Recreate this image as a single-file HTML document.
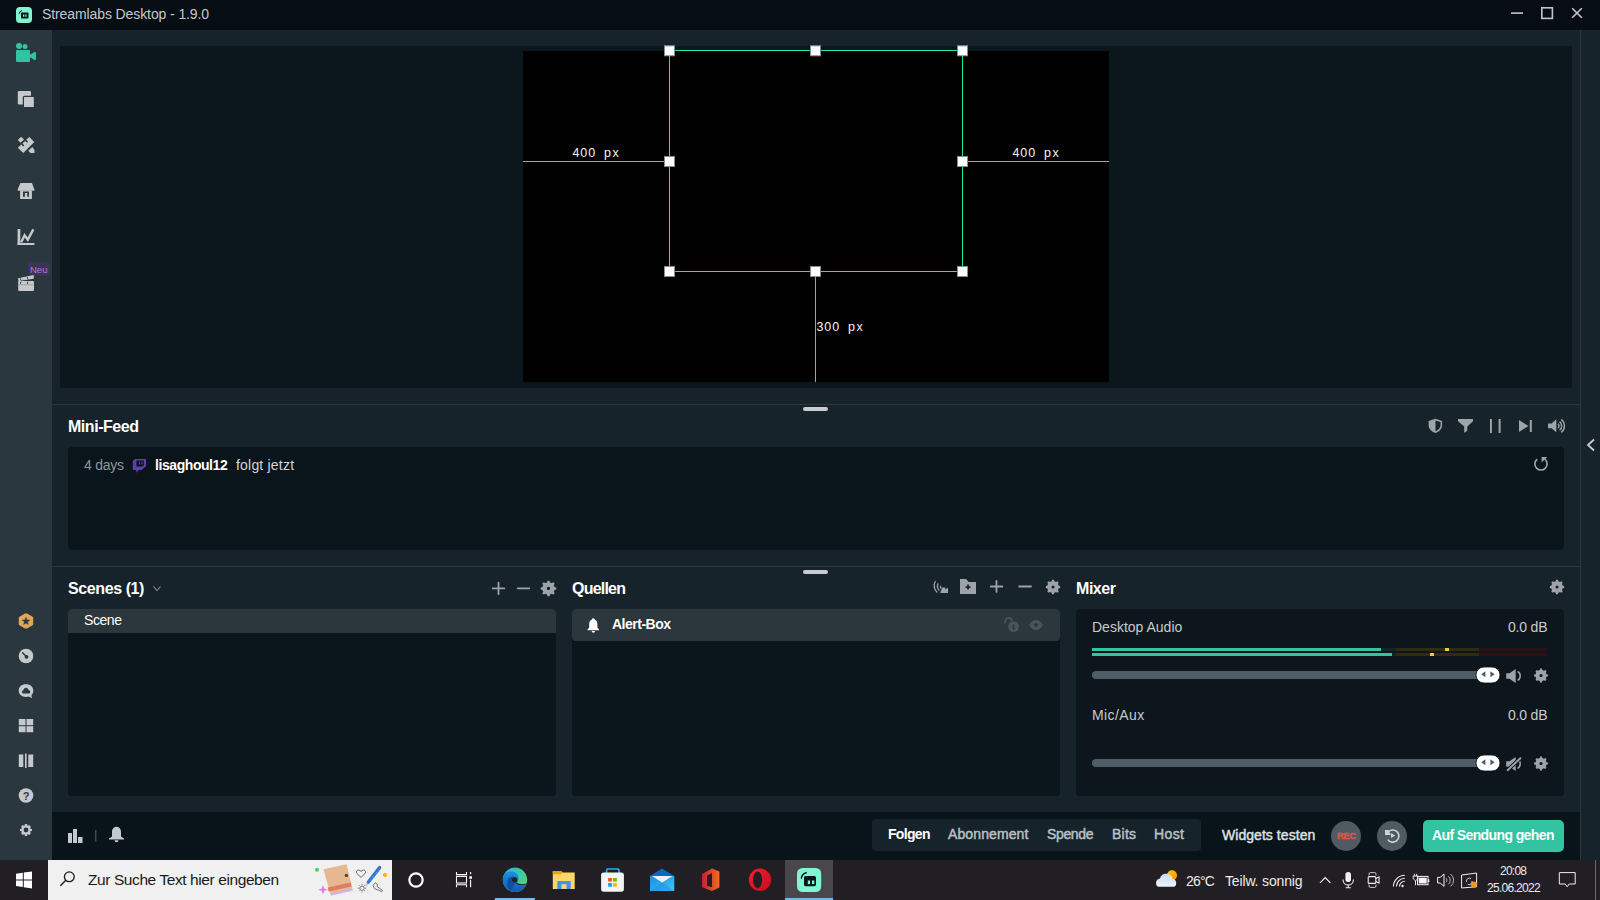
<!DOCTYPE html>
<html><head><meta charset="utf-8">
<style>
*{margin:0;padding:0;box-sizing:border-box}
html,body{width:1600px;height:900px;overflow:hidden;background:#17232b;font-family:"Liberation Sans",sans-serif}
.a{position:absolute}
.t{position:absolute;white-space:nowrap;line-height:1}
.b{font-weight:bold}
svg{position:absolute;overflow:visible}
</style></head><body>
<!-- title bar -->
<div class="a" style="left:0;top:0;width:1600px;height:30px;background:#060d13"></div>
<div class="t" style="left:42px;top:7px;font-size:14px;letter-spacing:-0.1px;color:#c4c8cb">Streamlabs Desktop - 1.9.0</div>

<!-- sidebar -->
<div class="a" style="left:0;top:30px;width:52px;height:830px;background:#2b373e"></div>
<div class="a" style="left:28px;top:262px;width:22px;height:14px;border-radius:4px;background:#3b3552"></div>
<div class="t" style="left:30px;top:265px;font-size:9.5px;color:#b674f8">Neu</div>

<!-- right strip -->
<div class="a" style="left:1580px;top:30px;width:1px;height:830px;background:#2b363d"></div>

<!-- preview -->
<div class="a" style="left:60px;top:46px;width:1512px;height:342px;background:#0c161d"></div>
<div class="a" style="left:523px;top:51px;width:586px;height:331px;background:#000"></div>
<div class="t" style="left:572.5px;top:147px;font-size:12.5px;letter-spacing:0.9px;color:#f4f4f4">400</div><div class="t" style="left:604.0px;top:147px;font-size:12.5px;letter-spacing:1.6px;color:#f4f4f4">px</div>
<div class="t" style="left:1012.5px;top:147px;font-size:12.5px;letter-spacing:0.9px;color:#f4f4f4">400</div><div class="t" style="left:1044.0px;top:147px;font-size:12.5px;letter-spacing:1.6px;color:#f4f4f4">px</div>
<div class="t" style="left:816.5px;top:321px;font-size:12.5px;letter-spacing:0.9px;color:#f4f4f4">300</div><div class="t" style="left:848.0px;top:321px;font-size:12.5px;letter-spacing:1.6px;color:#f4f4f4">px</div>

<!-- separators -->
<div class="a" style="left:52px;top:404px;width:1528px;height:1px;background:#2b363d"></div>
<div class="a" style="left:803px;top:407px;width:25px;height:4px;border-radius:2px;background:#c8cccf"></div>
<div class="a" style="left:52px;top:566px;width:1528px;height:1px;background:#2b363d"></div>
<div class="a" style="left:803px;top:570px;width:25px;height:4px;border-radius:2px;background:#c8cccf"></div>

<!-- mini feed -->
<div class="t b" style="left:68px;top:419px;font-size:16px;letter-spacing:-0.46px;color:#fff">Mini-Feed</div>
<div class="a" style="left:68px;top:447px;width:1496px;height:103px;border-radius:4px;background:#09141b"></div>
<div class="t" style="left:84px;top:458px;font-size:14px;letter-spacing:-0.24px;color:#8f989e">4 days</div>
<div class="t b" style="left:155px;top:458px;font-size:14px;letter-spacing:-0.43px;color:#fff">lisaghoul12</div>
<div class="t" style="left:236px;top:458px;font-size:14px;letter-spacing:0.2px;color:#d3d7d9">folgt jetzt</div>

<!-- scenes -->
<div class="t b" style="left:68px;top:581px;font-size:16px;letter-spacing:-0.4px;color:#fff">Scenes (1)</div>
<div class="a" style="left:68px;top:609px;width:488px;height:187px;border-radius:4px;background:#0a151c"></div>
<div class="a" style="left:68px;top:609px;width:488px;height:24px;border-radius:4px 4px 0 0;background:#2b363d"></div>
<div class="t" style="left:84px;top:613px;font-size:14px;letter-spacing:-0.43px;color:#fff">Scene</div>

<!-- sources -->
<div class="t b" style="left:572px;top:581px;font-size:16px;letter-spacing:-0.78px;color:#fff">Quellen</div>
<div class="a" style="left:572px;top:609px;width:488px;height:187px;border-radius:4px;background:#0a151c"></div>
<div class="a" style="left:572px;top:609px;width:488px;height:32px;border-radius:4px;background:#2b363d"></div>
<div class="t b" style="left:612px;top:617px;font-size:14px;letter-spacing:-0.5px;color:#fff">Alert-Box</div>

<!-- mixer -->
<div class="t b" style="left:1076px;top:581px;font-size:16px;letter-spacing:-0.45px;color:#fff">Mixer</div>
<div class="a" style="left:1076px;top:609px;width:488px;height:187px;border-radius:4px;background:#0c161c"></div>
<div class="t" style="left:1092px;top:620px;font-size:14px;color:#c8cbcc">Desktop Audio</div>
<div class="t" style="left:1508px;top:620px;font-size:14px;letter-spacing:-0.2px;color:#c8cbcc">0.0 dB</div>
<div class="t" style="left:1092px;top:708px;font-size:14px;letter-spacing:0.42px;color:#c8cbcc">Mic/Aux</div>
<div class="t" style="left:1508px;top:708px;font-size:14px;letter-spacing:-0.2px;color:#c8cbcc">0.0 dB</div>

<!-- bottom bar -->
<div class="a" style="left:52px;top:812px;width:1528px;height:48px;background:#08131a"></div>
<div class="a" style="left:872px;top:819px;width:329px;height:32px;border-radius:4px;background:#17232b"></div>
<div class="t b" style="left:888px;top:827px;font-size:14px;letter-spacing:-0.68px;color:#fff">Folgen</div>
<div class="t" style="left:948px;top:827px;font-size:14px;letter-spacing:0.11px;color:#b9c1c6;-webkit-text-stroke:0.45px #b9c1c6">Abonnement</div>
<div class="t" style="left:1047px;top:827px;font-size:14px;letter-spacing:-0.36px;color:#b9c1c6;-webkit-text-stroke:0.45px #b9c1c6">Spende</div>
<div class="t" style="left:1112px;top:827px;font-size:14px;letter-spacing:0.23px;color:#b9c1c6;-webkit-text-stroke:0.45px #b9c1c6">Bits</div>
<div class="t" style="left:1154px;top:827px;font-size:14px;letter-spacing:0.4px;color:#b9c1c6;-webkit-text-stroke:0.45px #b9c1c6">Host</div>
<div class="t" style="left:1222px;top:828px;font-size:14px;letter-spacing:0.05px;color:#dce0e2;-webkit-text-stroke:0.45px #dce0e2">Widgets testen</div>
<div class="a" style="left:1331px;top:821px;width:30px;height:30px;border-radius:50%;background:#4f5b61"></div>
<div class="t b" style="left:1337px;top:831px;font-size:9.5px;letter-spacing:-0.5px;color:#ec5149;-webkit-text-stroke:0.3px #ec5149">REC</div>
<div class="a" style="left:1377px;top:821px;width:30px;height:30px;border-radius:50%;background:#4f5b61"></div>
<div class="a" style="left:1423px;top:820px;width:141px;height:32px;border-radius:5px;background:#31c3a2"></div>
<div class="t b" style="left:1432px;top:828px;font-size:14px;letter-spacing:-0.61px;color:#fff">Auf Sendung gehen</div>

<!-- taskbar -->
<div class="a" style="left:0;top:860px;width:1600px;height:40px;background:#211e24"></div>
<div class="a" style="left:48px;top:860px;width:344px;height:40px;background:#f0f0f0"></div>
<div class="t" style="left:88px;top:872px;font-size:15.5px;letter-spacing:-0.41px;color:#1a1a1a">Zur Suche Text hier eingeben</div>
<div class="a" style="left:785px;top:860px;width:48px;height:40px;background:#4a474b"></div>
<div class="a" style="left:495px;top:898px;width:40px;height:2px;background:#76b9ed"></div>
<div class="a" style="left:785px;top:898px;width:48px;height:2px;background:#76b9ed"></div>
<div class="t" style="left:1186px;top:874px;font-size:14px;letter-spacing:-0.77px;color:#ececec">26°C</div>
<div class="t" style="left:1225px;top:874px;font-size:14px;letter-spacing:-0.15px;color:#ececec">Teilw. sonnig</div>
<div class="t" style="left:1500px;top:865px;font-size:12px;letter-spacing:-0.75px;color:#ececec">20:08</div>
<div class="t" style="left:1487px;top:882px;font-size:12px;letter-spacing:-0.72px;color:#ececec">25.06.2022</div>
<div class="a" style="left:1595px;top:860px;width:1px;height:40px;background:#6a666a"></div>

<!-- ICONS OVERLAY -->
<svg width="1600" height="900" viewBox="0 0 1600 900" style="left:0;top:0">
<!-- title logo -->
<rect x="16" y="7" width="16" height="16" rx="4" fill="#80f5d2"/>
<rect x="21" y="12.5" width="7.5" height="6" rx="1" fill="#09141b"/>
<rect x="23" y="14.5" width="1.3" height="2.2" fill="#80f5d2"/><rect x="25.2" y="14.5" width="1.3" height="2.2" fill="#80f5d2"/>
<path d="M19.2 13.8 A4 4 0 0 1 22 10.5" stroke="#09141b" stroke-width="1" fill="none"/>
<!-- window controls -->
<rect x="1511" y="12.3" width="12" height="1.6" fill="#c2c6c9"/>
<rect x="1541.8" y="7.8" width="10.6" height="10.6" fill="none" stroke="#c2c6c9" stroke-width="1.6"/>
<path d="M1572.2 8.2 L1581.8 17.8 M1581.8 8.2 L1572.2 17.8" stroke="#c2c6c9" stroke-width="1.6"/>

<!-- sidebar icons -->
<g fill="#31c3a2">
<circle cx="19" cy="46" r="3"/><circle cx="25" cy="46.6" r="2.5"/>
<rect x="16" y="50" width="14" height="12" rx="1"/>
<path d="M29.5 55 L34 52.2 Q36 51.5 36 53 L36 59 Q36 60.5 34 59.8 L29.5 57 Z"/>
</g>
<g fill="#c5c9cc">
<rect x="17.8" y="91" width="13.2" height="13.4" rx="1"/>
<rect x="23.4" y="96.4" width="11" height="11.2" rx="1" stroke="#2b373e" stroke-width="1.2"/>
<!-- tools -->
<path d="M17.8 140 L21.2 136.8 L24 139.6 L20.6 142.8 Z"/>
<path d="M17.8 147.8 L21.3 144.5 L23.2 146.4 L24.3 145.3 L22.4 143.4 L25.1 140.9 L27 142.8 L28.1 141.7 L26.2 139.8 L29.3 136.9 L34.3 141.9 L23.3 153 Z"/>
<path d="M28.3 150.8 L32.3 147 L34.5 150 L34.5 153 L30.6 153 Z"/>
<!-- store -->
<path d="M20.4 183 H31.9 L34.5 189.8 Q34.5 190.7 33.6 190.7 H18.4 Q17.6 190.7 17.6 189.8 Z"/>
<path d="M20.1 190.5 H31.9 V199 H20.1 Z M23 191.5 V196.8 H29 V191.5 Z" fill-rule="evenodd"/>
<rect x="24.9" y="193" width="2.4" height="4"/>
<!-- chart -->
<rect x="17.6" y="229" width="2.7" height="16"/>
<rect x="17.6" y="243" width="16.8" height="2"/>
</g>
<path d="M21.2 242.3 L24.6 235.3 L27.8 239.8 L33.3 229.4" stroke="#c5c9cc" stroke-width="2.4" fill="none" stroke-linejoin="miter"/>
<g fill="#c5c9cc">
<!-- clapper -->
<path d="M18 278.2 L33.6 275 L34 278.6 L18.6 281.8 Z"/>
<rect x="18.2" y="281" width="15.8" height="10" rx="1"/>
</g>
<path d="M22.5 280.4 H34.2" stroke="#2b373e" stroke-width="0.9"/>
<path d="M20.3 278.2 L21.5 281.2 M27 276.8 L28.2 279.8 M21 281.6 L20.4 284 M27.8 281.6 L27.3 284" stroke="#2b373e" stroke-width="0.9"/>
<rect x="18.2" y="284.3" width="15.8" height="0.9" fill="#99a0a3"/>

<!-- bottom sidebar icons -->
<path d="M27.2 614.2 L32.6 617.4 L32.6 624.4 L27.2 627.8 L24.8 627.8 L19.4 624.6 L19.4 617.6 L24.8 614.2 Z" fill="#e3a659" stroke="#e3a659" stroke-width="1.2" stroke-linejoin="round"/>
<path d="M26.00 617.20 L27.03 619.88 L29.90 620.03 L27.66 621.84 L28.41 624.62 L26.00 623.05 L23.59 624.62 L24.34 621.84 L22.10 620.03 L24.97 619.88 Z" fill="#2b373e" stroke="#2b373e" stroke-width="0.4" stroke-linejoin="round"/>
<circle cx="26" cy="656" r="7.3" fill="#c5c9cc"/>
<path d="M22.6 652.8 L26.3 656.6" stroke="#2b373e" stroke-width="1.4" stroke-linecap="round"/>
<circle cx="26.5" cy="656.8" r="1.9" fill="#2b373e"/>
<path d="M26 684.2 C30.5 684.2 33.3 686.8 33.3 690.5 C33.3 692.8 32.6 694.3 31.5 695 L31.8 698 L28.4 696.6 C27.6 696.8 26.8 696.9 26 696.9 C21.4 696.9 18.7 694.2 18.7 690.5 C18.7 686.8 21.4 684.2 26 684.2 Z M26 687.8 C24.7 687.8 23.8 688.8 23.6 689.9 C22.6 690.1 22 690.9 22 691.8 C22 692.8 22.8 693.6 23.8 693.6 H28.5 C29.5 693.6 30.2 692.8 30.2 691.9 C30.2 691 29.5 690.2 28.5 690.1 C28.3 688.8 27.3 687.8 26 687.8 Z" fill="#c5c9cc" fill-rule="evenodd"/>
<g fill="#c5c9cc">
<rect x="18.8" y="719" width="6.7" height="6.2"/><rect x="26.5" y="719" width="6.7" height="6.2"/>
<rect x="18.8" y="726.2" width="6.7" height="6"/><rect x="26.5" y="726.2" width="6.7" height="6"/>
<rect x="18.8" y="754.5" width="4.5" height="12.5"/><rect x="25" y="753.5" width="1.6" height="14.5"/><rect x="28.3" y="754.5" width="4.9" height="12.5"/>
<circle cx="26" cy="795.5" r="7.3"/>
</g>
<text x="26" y="799.8" text-anchor="middle" font-family="Liberation Sans" font-weight="bold" font-size="11" fill="#2b373e">?</text>
<path id="gear" d="M24.9 824 H27.1 L27.6 826.1 L29.3 825.1 L30.9 826.7 L29.9 828.4 L32 828.9 V831.1 L29.9 831.6 L30.9 833.3 L29.3 834.9 L27.6 833.9 L27.1 836 H24.9 L24.4 833.9 L22.7 834.9 L21.1 833.3 L22.1 831.6 L20 831.1 V828.9 L22.1 828.4 L21.1 826.7 L22.7 825.1 L24.4 826.1 Z M26 827.6 A2.4 2.4 0 1 0 26 832.4 A2.4 2.4 0 1 0 26 827.6 Z" fill="#c5c9cc" fill-rule="evenodd"/>

<!-- preview selection -->
<g stroke="#1de8a7" stroke-width="1" fill="none">
<rect x="669.5" y="50.5" width="293" height="221"/>
<path d="M523 161.5 H669 M962 161.5 H1109 M815.5 271 V382"/>
</g>
<g fill="#fff" stroke="#8a8a8a" stroke-width="1">
<rect x="664.5" y="45.8" width="10" height="10"/><rect x="810.5" y="45.8" width="10" height="10"/><rect x="957.5" y="45.8" width="10" height="10"/>
<rect x="664.5" y="156.5" width="10" height="10"/><rect x="957.5" y="156.5" width="10" height="10"/>
<rect x="664.5" y="266.5" width="10" height="10"/><rect x="810.5" y="266.5" width="10" height="10"/><rect x="957.5" y="266.5" width="10" height="10"/>
</g>
</svg>
<svg id="ic2" width="1600" height="900" viewBox="0 0 1600 900" style="left:0;top:0">
<!-- twitch -->
<path d="M132.8 460.7 L135.2 458.9 H146.1 V466 L141.6 470.1 H138.9 L136.3 472.8 V470.1 H132.8 Z M136.4 460.4 V466.6 H142.4 L143.9 465.2 V460.4 Z" fill="#5d3fa6" fill-rule="evenodd"/>
<rect x="138.9" y="461.5" width="1.2" height="3" fill="#5d3fa6"/><rect x="141.5" y="461.5" width="1.2" height="3" fill="#5d3fa6"/>
<!-- minifeed icons -->
<g fill="#9ea4a8">
<path d="M1435.5 418.8 L1442.1 421 V425 C1442.1 429 1439.2 431.8 1435.5 432.9 C1431.8 431.8 1428.6 429 1428.6 425 V421 Z M1435.5 420.6 V431.2 C1438.3 430.2 1440.6 428 1440.6 425 V422 Z" fill-rule="evenodd"/>
<path d="M1458 419 H1473 V421.2 L1467.3 426.5 V430.5 L1465 432.5 H1464.2 V426.5 L1458 421.2 Z"/>
<rect x="1490" y="419" width="1.9" height="14"/><rect x="1498.6" y="419" width="2" height="14"/>
<path d="M1519 420 L1528.5 426 L1519 432 Z"/><rect x="1529.8" y="420" width="2" height="12"/>
<path d="M1548 423.4 H1551.6 L1556.3 419.2 V432.2 L1551.6 428.3 H1548 Z"/>
</g>
<g fill="none" stroke="#9ea4a8" stroke-width="1.4">
<path d="M1558 423.8 A2.8 2.8 0 0 1 1558 428"/>
<path d="M1559.6 421.6 A5.5 5.5 0 0 1 1559.6 430.2"/>
<path d="M1561.3 419.4 A8.4 8.4 0 0 1 1561.3 432.4"/>
</g>
<!-- refresh -->
<path d="M1537.2 459.2 A6.1 6.1 0 1 0 1544.8 459.2" fill="none" stroke="#9ea4a8" stroke-width="1.6"/>
<path d="M1541.6 457 H1547.2 L1541.6 462.4 Z" fill="#9ea4a8"/>
<!-- right chevron -->
<path d="M1594 439.5 L1588 445 L1594 450.5" fill="none" stroke="#cdd1d3" stroke-width="1.7"/>

<!-- scenes icons -->
<g fill="#9da3a7">
<rect x="491.8" y="587.5" width="13.4" height="1.8" rx="0.9"/><rect x="497.6" y="581.8" width="1.8" height="13.2" rx="0.9"/>
<rect x="516.8" y="587.4" width="13.4" height="1.9" rx="0.95"/>
</g>
<path d="M547.01 582.38 L547.52 580.66 L549.48 580.66 L549.99 582.38 L551.70 583.09 L553.28 582.24 L554.66 583.62 L553.81 585.20 L554.52 586.91 L556.24 587.42 L556.24 589.38 L554.52 589.89 L553.81 591.60 L554.66 593.18 L553.28 594.56 L551.70 593.71 L549.99 594.42 L549.48 596.14 L547.52 596.14 L547.01 594.42 L545.30 593.71 L543.72 594.56 L542.34 593.18 L543.19 591.60 L542.48 589.89 L540.76 589.38 L540.76 587.42 L542.48 586.91 L543.19 585.20 L542.34 583.62 L543.72 582.24 L545.30 583.09 Z M548.50 586.70 A1.7 1.7 0 1 0 548.50 590.10 A1.7 1.7 0 1 0 548.50 586.70 Z" fill="#9da3a7" fill-rule="evenodd"/>
<path d="M153.5 586.5 L157 590.5 L160.5 586.5" fill="none" stroke="#8a9196" stroke-width="1.1"/>

<!-- sources icons -->
<g fill="none" stroke="#9da3a7" stroke-width="1.3">
<path d="M935.5 581 A9 9 0 0 0 937.3 592.5"/>
<path d="M938.2 583.4 A6 6 0 0 0 939.4 590.6"/>
<path d="M940.6 585.6 A3 3 0 0 0 941.2 588.6"/>
</g>
<path d="M940.2 593 L942.2 587.6 H945.2 V589.6 L948 587.4 V593 Z" fill="#9da3a7"/>
<path d="M960 579 H966.2 L968.6 582 H976 V594 H960 Z M967.2 584.6 V586.2 H965.6 V587.9 H967.2 V589.5 H968.9 V587.9 H970.5 V586.2 H968.9 V584.6 Z" fill="#9da3a7" fill-rule="evenodd"/>
<g fill="#9da3a7">
<rect x="989.9" y="585.6" width="13.3" height="1.8" rx="0.9"/><rect x="995.6" y="580" width="1.8" height="12.8" rx="0.9"/>
<rect x="1018.3" y="585.6" width="13.6" height="1.9" rx="0.95"/>
</g>
<path d="M1051.60 581.37 L1052.10 579.86 L1053.90 579.86 L1054.40 581.37 L1055.99 582.03 L1057.41 581.31 L1058.69 582.59 L1057.97 584.01 L1058.63 585.60 L1060.14 586.10 L1060.14 587.90 L1058.63 588.40 L1057.97 589.99 L1058.69 591.41 L1057.41 592.69 L1055.99 591.97 L1054.40 592.63 L1053.90 594.14 L1052.10 594.14 L1051.60 592.63 L1050.01 591.97 L1048.59 592.69 L1047.31 591.41 L1048.03 589.99 L1047.37 588.40 L1045.86 587.90 L1045.86 586.10 L1047.37 585.60 L1048.03 584.01 L1047.31 582.59 L1048.59 581.31 L1050.01 582.03 Z M1053.00 585.40 A1.6 1.6 0 1 0 1053.00 588.60 A1.6 1.6 0 1 0 1053.00 585.40 Z" fill="#9da3a7" fill-rule="evenodd"/>
<!-- lock / eye -->
<path d="M1005.2 623.6 C1004.5 620.5 1006 618 1008.5 618 C1010.5 618 1011.8 619.5 1011.8 621.5" fill="none" stroke="#48545b" stroke-width="1.8"/>
<circle cx="1013.6" cy="626.6" r="5.4" fill="#48545b"/>
<path d="M1013.6 624.4 A1.3 1.3 0 0 1 1014.4 626.6 L1014.6 629.4 H1012.6 L1012.8 626.6 A1.3 1.3 0 0 1 1013.6 624.4 Z" fill="#2b363d"/>
<path d="M1029 625 C1031 621.5 1033.5 620 1036 620 C1038.5 620 1041 621.5 1043 625 C1041 628.5 1038.5 630 1036 630 C1033.5 630 1031 628.5 1029 625 Z" fill="#48545b"/>
<circle cx="1036" cy="624.8" r="1.9" fill="#2b363d"/>
<!-- alert bell -->
<path d="M593.3 618.2 C594.2 618.2 594.6 618.9 594.6 619.6 C596.6 620.3 597.4 622.2 597.4 624.5 V627.4 L599 629.6 V630.3 H587.6 V629.6 L589.2 627.4 V624.5 C589.2 622.2 590 620.3 592 619.6 C592 618.9 592.4 618.2 593.3 618.2 Z" fill="#fff"/>
<path d="M591.6 631 H595 A1.7 1.7 0 0 1 591.6 631 Z" fill="#fff"/>

<!-- mixer -->
<path d="M1555.60 581.37 L1556.10 579.86 L1557.90 579.86 L1558.40 581.37 L1559.99 582.03 L1561.41 581.31 L1562.69 582.59 L1561.97 584.01 L1562.63 585.60 L1564.14 586.10 L1564.14 587.90 L1562.63 588.40 L1561.97 589.99 L1562.69 591.41 L1561.41 592.69 L1559.99 591.97 L1558.40 592.63 L1557.90 594.14 L1556.10 594.14 L1555.60 592.63 L1554.01 591.97 L1552.59 592.69 L1551.31 591.41 L1552.03 589.99 L1551.37 588.40 L1549.86 587.90 L1549.86 586.10 L1551.37 585.60 L1552.03 584.01 L1551.31 582.59 L1552.59 581.31 L1554.01 582.03 Z M1557.00 585.40 A1.6 1.6 0 1 0 1557.00 588.60 A1.6 1.6 0 1 0 1557.00 585.40 Z" fill="#9da3a7" fill-rule="evenodd"/>
<g>
<rect x="1092" y="648" width="289" height="3" fill="#31c3a2"/><rect x="1381" y="648" width="15" height="3" fill="#102824"/>
<rect x="1396" y="648" width="83" height="3" fill="#332a12"/><rect x="1479" y="648" width="68" height="3" fill="#2c1113"/>
<rect x="1445" y="648" width="4" height="3" fill="#f5c842"/>
<rect x="1092" y="653" width="300" height="3" fill="#31c3a2"/><rect x="1392" y="653" width="4" height="3" fill="#102824"/>
<rect x="1396" y="653" width="83" height="3" fill="#332a12"/><rect x="1479" y="653" width="68" height="3" fill="#2c1113"/>
<rect x="1430" y="653" width="4" height="3" fill="#f5c842"/>
</g>
<rect x="1092" y="671" width="398" height="8" rx="4" fill="#4f5e66"/>
<rect x="1476" y="667" width="24" height="16" rx="8" fill="#fff" stroke="#060d13" stroke-width="0.8"/>
<path d="M1485.4 671.2 V677.2 L1481.2 674.2 Z M1490.4 671.2 V677.2 L1494.7 674.2 Z" fill="#4f5e66"/>
<path d="M1506.2 673.3 H1509.5 L1515.7 669 V682.9 L1509.5 678.7 H1506.2 Z" fill="#9da3a7"/>
<path d="M1517.6 671.5 A5 5 0 0 1 1517.6 680.3" fill="none" stroke="#9da3a7" stroke-width="1.5"/>
<path d="M1539.65 670.07 L1540.12 668.56 L1541.88 668.56 L1542.35 670.07 L1543.89 670.70 L1545.29 669.97 L1546.53 671.21 L1545.80 672.61 L1546.43 674.15 L1547.94 674.62 L1547.94 676.38 L1546.43 676.85 L1545.80 678.39 L1546.53 679.79 L1545.29 681.03 L1543.89 680.30 L1542.35 680.93 L1541.88 682.44 L1540.12 682.44 L1539.65 680.93 L1538.11 680.30 L1536.71 681.03 L1535.47 679.79 L1536.20 678.39 L1535.57 676.85 L1534.06 676.38 L1534.06 674.62 L1535.57 674.15 L1536.20 672.61 L1535.47 671.21 L1536.71 669.97 L1538.11 670.70 Z M1541.00 673.90 A1.6 1.6 0 1 0 1541.00 677.10 A1.6 1.6 0 1 0 1541.00 673.90 Z" fill="#9da3a7" fill-rule="evenodd"/>
<rect x="1092" y="759" width="398" height="8" rx="4" fill="#4f5e66"/>
<rect x="1476" y="755" width="24" height="16" rx="8" fill="#fff" stroke="#060d13" stroke-width="0.8"/>
<path d="M1485.4 759.2 V765.2 L1481.2 762.2 Z M1490.4 759.2 V765.2 L1494.7 762.2 Z" fill="#4f5e66"/>
<path d="M1506.2 761.3 H1509.5 L1515.7 757 V770.9 L1509.5 766.7 H1506.2 Z" fill="#9da3a7"/>
<path d="M1517.6 759.5 A5 5 0 0 1 1517.6 768.3" fill="none" stroke="#9da3a7" stroke-width="1.5"/>
<path d="M1507.6 770.2 L1520.4 758.2" stroke="#0c161c" stroke-width="3.8" stroke-linecap="round"/>
<path d="M1507.6 770.2 L1520.4 758.2" stroke="#9da3a7" stroke-width="1.9" stroke-linecap="round"/>
<path d="M1539.65 758.07 L1540.12 756.56 L1541.88 756.56 L1542.35 758.07 L1543.89 758.70 L1545.29 757.97 L1546.53 759.21 L1545.80 760.61 L1546.43 762.15 L1547.94 762.62 L1547.94 764.38 L1546.43 764.85 L1545.80 766.39 L1546.53 767.79 L1545.29 769.03 L1543.89 768.30 L1542.35 768.93 L1541.88 770.44 L1540.12 770.44 L1539.65 768.93 L1538.11 768.30 L1536.71 769.03 L1535.47 767.79 L1536.20 766.39 L1535.57 764.85 L1534.06 764.38 L1534.06 762.62 L1535.57 762.15 L1536.20 760.61 L1535.47 759.21 L1536.71 757.97 L1538.11 758.70 Z M1541.00 761.90 A1.6 1.6 0 1 0 1541.00 765.10 A1.6 1.6 0 1 0 1541.00 761.90 Z" fill="#9da3a7" fill-rule="evenodd"/>

<!-- bottom bar icons -->
<g fill="#c5c9cc">
<rect x="68" y="833" width="4" height="10"/><rect x="73" y="829" width="4" height="14"/><rect x="78" y="837" width="4.5" height="6"/>
<rect x="95.3" y="830" width="1" height="11.5" fill="#5a6369"/>
<path d="M116.5 826.8 C119 826.8 121 829 121 832 V836.5 L124 838.5 V839.5 H109 V838.5 L112 836.5 V832 C112 829 114 826.8 116.5 826.8 Z"/>
<path d="M114.5 840.3 H118.5 A2 2 0 0 1 114.5 840.3 Z"/>
</g>
<!-- replay icon -->
<path d="M1388.6 831.6 A6.1 6.1 0 1 1 1387.8 839.6" fill="none" stroke="#cfd3d5" stroke-width="1.6"/>
<path d="M1385 829.9 H1388.4 L1390.9 834.9 H1385 Z" fill="#cfd3d5"/>
<path d="M1391 833.3 V837.9 L1395.2 835.6 Z" fill="#cfd3d5"/>
</svg>
<svg id="ic3" width="1600" height="900" viewBox="0 0 1600 900" style="left:0;top:0">
<defs>
<linearGradient id="edgeA" x1="0" y1="0" x2="1" y2="1"><stop offset="0" stop-color="#1fb6e6"/><stop offset="1" stop-color="#5ddc5a"/></linearGradient>
<linearGradient id="edgeB" x1="0" y1="0" x2="0" y2="1"><stop offset="0" stop-color="#1d8fe0"/><stop offset="1" stop-color="#0d5cb0"/></linearGradient>
<linearGradient id="opera" x1="0" y1="0" x2="1" y2="1"><stop offset="0" stop-color="#ff1b2d"/><stop offset="1" stop-color="#c10d20"/></linearGradient>
<linearGradient id="office" x1="0" y1="0" x2="1" y2="0"><stop offset="0" stop-color="#c71f33"/><stop offset="1" stop-color="#f26b1d"/></linearGradient>
<linearGradient id="mail" x1="0" y1="0" x2="1" y2="1"><stop offset="0" stop-color="#1a8ee0"/><stop offset="1" stop-color="#3cc7f5"/></linearGradient>
</defs>
<!-- windows logo -->
<path d="M16 873.8 L22.8 872.8 V879.4 H16 Z M23.8 872.6 L32 871.4 V879.4 H23.8 Z M16 880.4 H22.8 V887 L16 886 Z M23.8 880.4 H32 V888.4 L23.8 887.2 Z" fill="#fff"/>
<!-- search glass -->
<circle cx="69.3" cy="876.8" r="4.9" fill="none" stroke="#1a1a1a" stroke-width="1.3"/>
<path d="M65.8 880.3 L60.3 885.8" stroke="#1a1a1a" stroke-width="1.4"/>
<!-- search doodles -->
<circle cx="317" cy="869.8" r="2" fill="#45d16b"/>
<circle cx="385" cy="875" r="2.1" fill="#ffb000"/>
<path d="M323.4 869.2 L346.6 864.2 L352.8 890.4 L330.9 895.4 Z" fill="#e6b891"/>
<path d="M327.6 887.5 L350.6 882.5 L351.6 886.5 L328.6 891.5 Z" fill="#e07c66"/>
<path d="M330.4 893.6 L352.2 888.6 L352.8 890.4 L330.9 895.4 Z" fill="#c9b4f0"/>
<circle cx="346.4" cy="875.4" r="1.7" fill="#6b3c1e"/>
<path d="M323 885 L324.3 888.6 L327.8 889.8 L324.3 891 L323 894.6 L321.7 891 L318.2 889.8 L321.7 888.6 Z" fill="#e77cf0"/>
<path d="M361 877.4 L357 873.5 C355.5 871.5 357.5 869 360 870.6 L361 871.4 L362 870.6 C364.5 869 366.5 871.5 365 873.5 Z" fill="none" stroke="#444" stroke-width="0.8"/>
<path d="M368.2 882.2 L379.6 867.6" stroke="#2f7bd1" stroke-width="3.4" stroke-linecap="round"/><path d="M372.5 876.8 L374.6 878.4 M376 872.3 L378 873.9" stroke="#9cc3ee" stroke-width="0.6"/>
<path d="M366 883.5 L365.2 886 L368.5 885 Z" fill="#b9b2dc"/>
<circle cx="362" cy="888.2" r="2.2" fill="none" stroke="#555" stroke-width="0.8"/>
<path d="M362 883.8 V885 M362 891.4 V892.6 M357.8 888.2 H359 M365 888.2 H366.2 M359 885.2 L359.8 886 M364.2 890.4 L365 891.2 M365 885.2 L364.2 886 M359.8 890.4 L359 891.2" stroke="#555" stroke-width="0.7"/>
<path d="M373 885.5 L375.2 882.8 L377.4 884.4 L377 886.4 L382 890 C383 890.8 382.4 891.8 381.2 891.4 L374.6 888.6 Z" fill="none" stroke="#555" stroke-width="0.8"/>
<!-- cortana -->
<circle cx="416" cy="880" r="6.65" fill="none" stroke="#fff" stroke-width="2.2"/>
<!-- task view -->
<g fill="none" stroke="#fff" stroke-width="1.1">
<path d="M456.5 872 V874.6 H466.5 V872"/>
<rect x="456.5" y="876.4" width="10" height="6.6"/>
<path d="M456.5 887.2 V884.8 H466.5 V887.2"/>
<path d="M470.6 872 V874.2 M470.6 879.8 V887.2"/>
</g>
<rect x="469.4" y="876.2" width="2.5" height="2.6" fill="#fff"/>
<!-- edge -->
<circle cx="515" cy="879.8" r="12.2" fill="url(#edgeA)"/>
<path d="M502.8 878.5 C503.5 873 508 871 512 871.5 C516.5 872 519 875.5 518.5 879.5 C518.2 882 516.8 883.6 516 884 C519.5 885.8 523.5 885.5 526.6 884 C524.6 889 520.2 892 515 892 C508.2 892 502.8 886.6 502.8 879.8 Z" fill="url(#edgeB)"/>
<path d="M509.6 889.5 C506.5 886 506.2 880.5 509.5 877.8 C512 875.8 516 876.5 517.2 879.5 C515.5 883.5 513 885.5 511.6 890.6 Z" fill="#0f4f9e"/>
<circle cx="514.6" cy="879.8" r="2.6" fill="#211e24"/>
<path d="M516.2 882.6 C519.8 884.6 523.6 884.8 527 883.2 L526.6 884.2 C523.5 885.6 519.5 885.8 516 884 Z" fill="#211e24"/>
<!-- folder -->
<path d="M552.8 871 H561 L562.6 872.6 H574.7 V888.9 H552.8 Z" fill="#ffd46b"/>
<path d="M552.8 871 H561 L562.6 872.6 L561 874.2 H552.8 Z" fill="#e8a40c"/>
<path d="M557.3 881 H570.7 V889 H566.5 V884.2 H561.5 V889 H557.3 Z" fill="#3d97e6"/>
<!-- store -->
<path d="M606.6 874 V870.2 Q606.6 869 607.8 869 H617.8 Q619 869 619 870.2 V874" fill="none" stroke="#1fb1f0" stroke-width="1.7"/>
<rect x="601.1" y="872.4" width="22.8" height="19.3" rx="2.6" fill="#f4f4f4"/>
<rect x="608.2" y="878" width="3.6" height="3.6" fill="#f25022"/><rect x="613" y="878" width="3.8" height="3.6" fill="#7fba00"/>
<rect x="608.2" y="883" width="3.6" height="3.8" fill="#00a4ef"/><rect x="613" y="883" width="3.8" height="3.8" fill="#ffb900"/>
<!-- mail -->
<path d="M650 876 L662 868.5 L674.3 876 Z" fill="#0a68c0"/>
<rect x="650" y="876" width="24.3" height="15" fill="url(#mail)"/>
<path d="M652 876 H672.5 L662.2 882.6 Z" fill="#f2f2f2"/>
<path d="M662.2 882.6 L674.3 891 H650 Z" fill="#1a7fd8" opacity="0.35"/>
<!-- office -->
<path d="M702 874 L712 868.5 L719.4 871.5 V887.5 L712 890.9 L702 887.2 Z M707 875.5 V886 L712 887 V873 Z" fill="url(#office)" fill-rule="evenodd"/>
<!-- opera -->
<path d="M760 868.6 A11.2 11.2 0 1 1 760 891 A11.2 11.2 0 1 1 760 868.6 Z M757.6 871.6 A4.6 8.3 0 1 0 757.6 888.2 A4.6 8.3 0 1 0 757.6 871.6 Z" fill="url(#opera)" fill-rule="evenodd"/>
<!-- streamlabs -->
<rect x="797" y="868" width="24.2" height="24" rx="5.5" fill="#80f5d2"/>
<rect x="804" y="876" width="12" height="10.2" rx="1.6" fill="#09141b"/>
<rect x="807.8" y="880.5" width="2.3" height="3.6" fill="#80f5d2"/><rect x="812" y="880.5" width="2.3" height="3.6" fill="#80f5d2"/>
<path d="M801.3 878.6 A7 7 0 0 1 806.7 872.5" fill="none" stroke="#09141b" stroke-width="1.4"/>

<!-- tray -->
<defs><linearGradient id="sun" x1="0" y1="0" x2="1" y2="1"><stop offset="0" stop-color="#ffd000"/><stop offset="1" stop-color="#ff8a00"/></linearGradient>
<linearGradient id="cloud" x1="0" y1="0" x2="0" y2="1"><stop offset="0" stop-color="#c9dcf5"/><stop offset="1" stop-color="#eef3f8"/></linearGradient></defs>
<circle cx="1172" cy="875.3" r="5.1" fill="url(#sun)"/>
<path d="M1159 886.8 H1173.5 C1175.5 886.8 1176.2 885 1176.2 883 C1176.2 880.5 1174.5 878.8 1172.5 878.8 C1171.8 875.5 1169.5 873.7 1166 873.7 C1162.5 873.7 1160.5 876 1160 878.5 C1157.5 879 1156 880.8 1156 883 C1156 885.3 1157.2 886.8 1159 886.8 Z" fill="url(#cloud)"/>
<path d="M1320 882.8 L1325.2 877.6 L1330.4 882.8" fill="none" stroke="#f0f0f0" stroke-width="1.2"/>
<rect x="1345.4" y="872" width="5.6" height="10" rx="2.8" fill="#f0f0f0"/>
<path d="M1343 879.5 C1343 883 1345.5 885 1348.2 885 C1351 885 1353.4 883 1353.4 879.5 M1348.2 885 V887.6 M1345.6 887.8 H1350.8" fill="none" stroke="#f0f0f0" stroke-width="1.1"/>
<path d="M1369 875.5 V874 Q1369 872.6 1370.4 872.6 H1374.6 Q1376 872.6 1376 874 V875.5 M1369 884.5 V886 Q1369 887.4 1370.4 887.4 H1374.6 Q1376 887.4 1376 886 V884.5" fill="none" stroke="#e0e0e0" stroke-width="0.9"/>
<rect x="1368.2" y="876.6" width="7.6" height="6.8" rx="1" fill="none" stroke="#f0f0f0" stroke-width="1.1"/>
<path d="M1376 878.4 L1379 876.8 V883.2 L1376 881.6" fill="none" stroke="#f0f0f0" stroke-width="1.1"/>
<g fill="none" stroke="#f0f0f0" stroke-width="1.1">
<path d="M1393.4 886.5 A11.5 11.5 0 0 1 1404.8 875.2"/>
<path d="M1396.4 886.5 A8.5 8.5 0 0 1 1404.8 878.2"/>
<path d="M1399.4 886.5 A5.5 5.5 0 0 1 1404.8 881.2"/>
</g>
<circle cx="1402.5" cy="886" r="1.2" fill="#f0f0f0"/>
<rect x="1417.5" y="876.4" width="10.5" height="8.3" fill="none" stroke="#f4f4f4" stroke-width="1"/>
<rect x="1418.7" y="877.7" width="8" height="5.8" fill="#f4f4f4"/>
<rect x="1428" y="879.4" width="1.3" height="2.6" fill="#f4f4f4"/>
<path d="M1414.4 873.8 V876.2 M1416.6 873.8 V876.2 M1415.5 880.6 V885.2" stroke="#f4f4f4" stroke-width="0.9" fill="none"/>
<path d="M1413.2 876 H1417.8 V878.8 L1415.5 880.8 L1413.2 878.8 Z" fill="none" stroke="#f4f4f4" stroke-width="0.9"/>
<path d="M1437.6 877.4 H1440.2 L1444 874 V886.4 L1440.2 883 H1437.6 Z" fill="none" stroke="#f0f0f0" stroke-width="1"/>
<g fill="none" stroke="#c8c8c8" stroke-width="0.9">
<path d="M1446 878.2 A2.6 2.6 0 0 1 1446 882.2"/>
<path d="M1448.4 876.2 A5.2 5.2 0 0 1 1448.4 884.2"/>
<path d="M1450.6 874 A8 8 0 0 1 1450.6 886.4"/>
</g>
<path d="M1461.6 875 L1476.6 873 V886.8 L1461.6 888 Z" fill="none" stroke="#f0f0f0" stroke-width="1"/>
<path d="M1466.5 882 A3 3 0 0 1 1471 878.6 M1472 881 A3 3 0 0 1 1467.5 884.2" fill="none" stroke="#e0e0e0" stroke-width="0.9"/>
<circle cx="1473.8" cy="884.6" r="3.1" fill="#f7941d"/>
<path d="M1559.3 872.6 H1575.2 V884 H1569.2 L1567.2 886.8 L1565.2 884 H1559.3 Z" fill="none" stroke="#f0f0f0" stroke-width="1"/>
</svg>
</body></html>
